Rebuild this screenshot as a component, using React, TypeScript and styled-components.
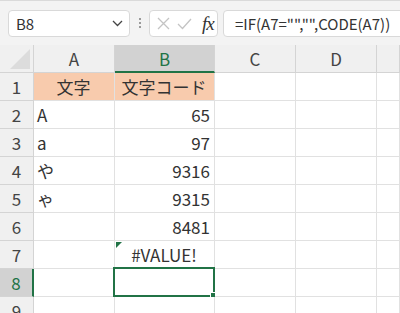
import React from 'react';
import styled, { createGlobalStyle, css } from 'styled-components';

const GlobalStyle = createGlobalStyle`
  html, body {
    margin: 0;
    padding: 0;
    background: #ffffff;
    font-family: "Noto Sans CJK JP", "Noto Sans", sans-serif;
  }
`;

const GREEN = '#217346';
const GRID = '#e1e1e1';

const Page = styled.div`
  width: 400px;
  height: 313px;
  overflow: hidden;
  background: #ffffff;
`;

const Toolbar = styled.div`
  height: 45px;
  box-sizing: border-box;
  border-top: 1px solid #dadada;
  background: #f3f3f3;
  display: flex;
  align-items: center;
  padding: 0 0 0 8px;
  overflow: hidden;
  & > * {
    flex-shrink: 0;
  }
`;

const Box = styled.div<{ $w: number; $gap?: number }>`
  width: ${(p) => p.$w}px;
  margin-left: ${(p) => p.$gap || 0}px;
  height: 27px;
  box-sizing: border-box;
  background: #ffffff;
  border: 1px solid #d9d9d9;
  border-radius: 4px;
  display: flex;
  align-items: center;
`;

const NameText = styled.span`
  flex: 1;
  padding-left: 7px;
  font-size: 15px;
  color: #333;
`;

const Chevron = styled.svg`
  margin-right: 6px;
`;

const Dots = styled.div`
  width: 19px;
  display: flex;
  flex-direction: column;
  align-items: center;
  gap: 2px;
  span {
    width: 2px;
    height: 2px;
    background: #9a9a9a;
  }
`;

const IconRow = styled.div`
  display: flex;
  align-items: center;
  gap: 7px;
  padding-left: 7px;
`;

const Fx = styled.span`
  font-family: "Liberation Serif", serif;
  font-style: italic;
  font-size: 19px;
  line-height: 1;
  color: #333;
  margin-left: 3px;
  letter-spacing: -1px;
`;

const Formula = styled.span`
  padding-left: 11px;
  font-size: 15px;
  color: #333;
  white-space: nowrap;
`;

const Row = styled.div<{ $h: number }>`
  display: grid;
  grid-template-columns: 34px 81px 100px 81px 81px 1fr;
  height: ${(p) => p.$h}px;
`;

const HeadCell = styled.div<{ $sel?: boolean }>`
  position: relative;
  box-sizing: border-box;
  background: #f0f0f0;
  border-right: 1px solid #d4d4d4;
  border-bottom: 1px solid #d4d4d4;
  display: flex;
  align-items: center;
  justify-content: center;
  font-size: 17px;
  color: #444;
  ${(p) =>
    p.$sel &&
    css`
      background: #d2d2d2;
      color: ${GREEN};
      border-bottom: 2px solid ${GREEN};
    `}
`;

const Corner = styled.div`
  position: absolute;
  right: 3px;
  bottom: 3px;
  width: 0;
  height: 0;
  border-left: 20px solid transparent;
  border-bottom: 20px solid #dcdcdc;
`;

const RowHead = styled.div<{ $sel?: boolean }>`
  box-sizing: border-box;
  background: #f0f0f0;
  border-right: 1px solid #d4d4d4;
  border-bottom: 1px solid #d4d4d4;
  display: flex;
  align-items: center;
  justify-content: center;
  font-size: 17px;
  color: #444;
  ${(p) =>
    p.$sel &&
    css`
      background: #d2d2d2;
      color: ${GREEN};
      border-right: 2px solid ${GREEN};
    `}
`;

const Cell = styled.div<{ $align?: 'left' | 'right' | 'center'; $fill?: string }>`
  position: relative;
  box-sizing: border-box;
  border-right: 1px solid ${GRID};
  border-bottom: 1px solid ${GRID};
  background: ${(p) => p.$fill || '#ffffff'};
  display: flex;
  align-items: center;
  justify-content: ${(p) =>
    p.$align === 'right' ? 'flex-end' : p.$align === 'center' ? 'center' : 'flex-start'};
  padding: 0 4px 0 3px;
  font-size: 17px;
  color: #333;
  white-space: nowrap;
`;

const ErrorMark = styled.span`
  position: absolute;
  left: 1px;
  top: 1px;
  width: 0;
  height: 0;
  border-top: 6px solid ${GREEN};
  border-right: 6px solid transparent;
`;

const Selection = styled.span`
  position: absolute;
  left: -2px;
  top: -2px;
  right: -1px;
  bottom: -1px;
  border: 2px solid ${GREEN};
  pointer-events: none;
  &::after {
    content: '';
    position: absolute;
    right: -4px;
    bottom: -4px;
    width: 5px;
    height: 5px;
    background: ${GREEN};
    border: 1px solid #fff;
  }
`;

type CellData = { text?: string; align?: 'left' | 'right' | 'center'; fill?: string };

const PEACH = '#f8cbad';

const rows: CellData[][] = [
  [{ text: '文字', align: 'center', fill: PEACH }, { text: '文字コード', align: 'center', fill: PEACH }],
  [{ text: 'A' }, { text: '65', align: 'right' }],
  [{ text: 'a' }, { text: '97', align: 'right' }],
  [{ text: 'や' }, { text: '9316', align: 'right' }],
  [{ text: 'ゃ' }, { text: '9315', align: 'right' }],
  [{}, { text: '8481', align: 'right' }],
  [{}, { text: '#VALUE!', align: 'center' }],
  [{}, {}],
  [{}, {}],
];

const App: React.FC = () => {
  return (
    <Page>
      <GlobalStyle />
      <Toolbar>
        <Box $w={122}>
          <NameText>B8</NameText>
          <Chevron width="11" height="7" viewBox="0 0 11 7">
            <path d="M1 1 L5.5 5.5 L10 1" fill="none" stroke="#444" strokeWidth="1.3" />
          </Chevron>
        </Box>
        <Dots>
          <span />
          <span />
          <span />
        </Dots>
        <Box $w={69}>
          <IconRow>
            <svg width="13" height="13" viewBox="0 0 13 13">
              <path d="M1 1 L12 12 M12 1 L1 12" stroke="#c4c4c4" strokeWidth="1.3" />
            </svg>
            <svg width="15" height="13" viewBox="0 0 15 13">
              <path d="M1 7 L5.5 11.5 L14 2" fill="none" stroke="#c4c4c4" strokeWidth="1.3" />
            </svg>
            <Fx>fx</Fx>
          </IconRow>
        </Box>
        <Box $w={200} $gap={5}>
          <Formula>=IF(A7="","",CODE(A7))</Formula>
        </Box>
      </Toolbar>
      <Row $h={28}>
        <HeadCell>
          <Corner />
        </HeadCell>
        <HeadCell>A</HeadCell>
        <HeadCell $sel>B</HeadCell>
        <HeadCell>C</HeadCell>
        <HeadCell>D</HeadCell>
        <HeadCell />
      </Row>
      {rows.map((r, i) => (
        <Row $h={28} key={i}>
          <RowHead $sel={i === 7}>{i + 1}</RowHead>
          {r.map((c, j) => (
            <Cell key={j} $align={c.align} $fill={c.fill}>
              {i === 6 && j === 1 && <ErrorMark />}
              {c.text}
              {i === 7 && j === 1 && <Selection />}
            </Cell>
          ))}
          <Cell />
          <Cell />
          <Cell />
        </Row>
      ))}
    </Page>
  );
};

export default App;
